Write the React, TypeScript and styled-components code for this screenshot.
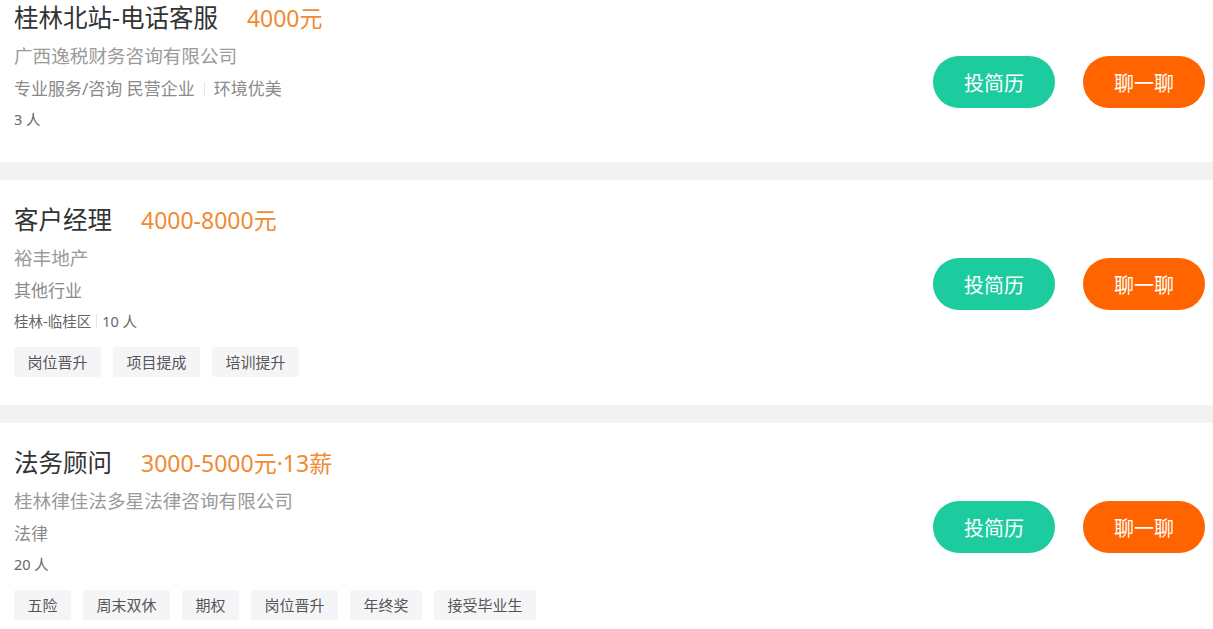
import React from "react";
import styled, { createGlobalStyle } from "styled-components";

const Global = createGlobalStyle`
  html, body { margin: 0; padding: 0; background: #fff; }
  body { font-family: "Noto Sans", "Noto Sans CJK SC", sans-serif; overflow: hidden; }
`;

const List = styled.div`
  display: flex;
  flex-direction: column;
  gap: 18px;
  background: #f2f2f2;
  margin-top: -22px;
`;

const Card = styled.div`
  box-sizing: border-box;
  min-height: 184px;
  background: #fff;
  display: flex;
  justify-content: space-between;
  align-items: flex-start;
  padding: 24px 8px 28px 14px;
`;

const Info = styled.div`
  display: flex;
  flex-direction: column;
`;

const TitleRow = styled.div`
  display: flex;
  align-items: baseline;
  gap: 29px;
  height: 32px;
  line-height: 32px;
`;

const Title = styled.span`
  font-size: 24.5px;
  color: #333;
`;

const Salary = styled.span`
  font-size: 23px;
  color: #f08a33;
`;

const Company = styled.div`
  margin-top: 10px;
  font-size: 18.6px;
  line-height: 24px;
  color: #9a9a9a;
`;

const Meta = styled.div<{ $small?: boolean }>`
  display: flex;
  align-items: center;
  margin-top: ${(p) => (p.$small ? "8px" : "9px")};
  font-size: ${(p) => (p.$small ? "14.5px" : "17px")};
  line-height: ${(p) => (p.$small ? "20px" : "24px")};
  color: ${(p) => (p.$small ? "#666" : "#8a8a8a")};
`;

const Divider = styled.span<{ $wide?: boolean }>`
  display: inline-block;
  width: 1px;
  height: 14px;
  background: #e6e6e6;
  margin: 0 ${(p) => (p.$wide ? "9px" : "5px")};
`;

const Tags = styled.div`
  display: flex;
  gap: 12px;
  margin-top: 16px;
`;

const Tag = styled.span`
  height: 30px;
  line-height: 30px;
  padding: 0 13.5px;
  background: #f5f5f8;
  color: #555;
  font-size: 15px;
  border-radius: 2px;
`;

const Actions = styled.div`
  display: flex;
  gap: 28px;
  margin-top: 54px;
`;

const Btn = styled.button<{ $color: string }>`
  width: 122px;
  height: 52px;
  border: none;
  border-radius: 26px;
  background: ${(p) => p.$color};
  color: #fff;
  font-family: "Noto Sans CJK SC", sans-serif;
  font-size: 20px;
  padding: 0;
  cursor: pointer;
`;

type Job = {
  title: string;
  salary: string;
  company: string;
  industry: React.ReactNode;
  extra: React.ReactNode;
  tags: string[];
};

const jobs: Job[] = [
  {
    title: "桂林北站-电话客服",
    salary: "4000元",
    company: "广西逸税财务咨询有限公司",
    industry: (
      <>
        专业服务/咨询 民营企业<Divider $wide />环境优美
      </>
    ),
    extra: "3 人",
    tags: [],
  },
  {
    title: "客户经理",
    salary: "4000-8000元",
    company: "裕丰地产",
    industry: "其他行业",
    extra: (
      <>
        桂林-临桂区<Divider />10 人
      </>
    ),
    tags: ["岗位晋升", "项目提成", "培训提升"],
  },
  {
    title: "法务顾问",
    salary: "3000-5000元·13薪",
    company: "桂林律佳法多星法律咨询有限公司",
    industry: "法律",
    extra: "20 人",
    tags: ["五险", "周末双休", "期权", "岗位晋升", "年终奖", "接受毕业生"],
  },
];

export default function App() {
  return (
    <>
      <Global />
      <List>
        {jobs.map((j) => (
          <Card key={j.title}>
            <Info>
              <TitleRow>
                <Title>{j.title}</Title>
                <Salary>{j.salary}</Salary>
              </TitleRow>
              <Company>{j.company}</Company>
              <Meta>{j.industry}</Meta>
              <Meta $small>{j.extra}</Meta>
              {j.tags.length > 0 && (
                <Tags>
                  {j.tags.map((t) => (
                    <Tag key={t}>{t}</Tag>
                  ))}
                </Tags>
              )}
            </Info>
            <Actions>
              <Btn $color="#1ccc9f">投简历</Btn>
              <Btn $color="#ff6400">聊一聊</Btn>
            </Actions>
          </Card>
        ))}
      </List>
    </>
  );
}
